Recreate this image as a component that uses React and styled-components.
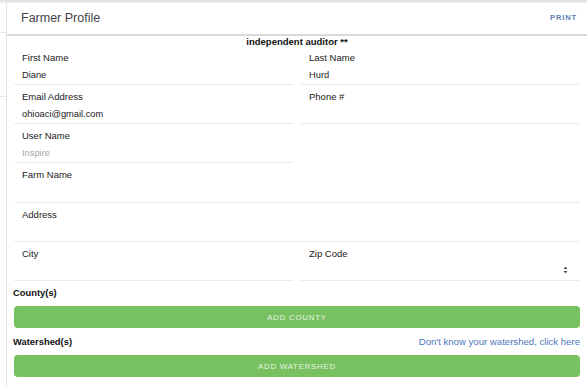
import React from "react";
import styled, { createGlobalStyle } from "styled-components";

const Global = createGlobalStyle`
  html, body { margin: 0; padding: 0; background: #fff; }
  body { font-family: "Liberation Sans", Arial, Helvetica, sans-serif; color: #1a1a1a; }
  * { box-sizing: border-box; }
`;

const Screen = styled.div`
  width: 587px;
  height: 387px;
  overflow: hidden;
  display: flex;
  flex-direction: column;
`;

const TopShade = styled.div`
  height: 3px;
  flex: none;
  background: linear-gradient(#dedede, #efefef);
`;

const Stage = styled.div`
  flex: 1;
  display: flex;
`;

const Backdrop = styled.div`
  width: 7px;
  flex: none;
  border-right: 1px solid #e4e4e4;
  display: flex;
  flex-direction: column;
`;

const BackdropRow = styled.div`
  height: ${(p) => p.$h}px;
  border-bottom: 1px solid #e6e6e6;
`;

const Modal = styled.div`
  flex: 1;
  display: flex;
  flex-direction: column;
  background: #fff;
`;

const Header = styled.div`
  height: 33px;
  display: flex;
  align-items: center;
  justify-content: space-between;
  padding: 0 10px 1px 14px;
  border-bottom: 2px solid #dadada;
`;

const Title = styled.div`
  font-size: 12.5px;
  color: #444;
`;

const PrintLink = styled.a`
  font-size: 7.5px;
  font-weight: 700;
  letter-spacing: 0.9px;
  color: #5a7db5;
  text-decoration: none;
  margin-top: -2px;
`;

const Body = styled.div`
  padding: 0 7px;
`;

const Notice = styled.div`
  font-size: 9.5px;
  font-weight: 700;
  line-height: 11px;
  height: 10px;
  text-align: center;
  color: #111;
`;

const Grid = styled.div`
  display: grid;
  grid-template-columns: 1fr 1fr;
  column-gap: 8px;
`;

const Field = styled.div`
  height: ${(p) => p.$h || 39}px;
  padding: 6px 8px 0;
  border-bottom: ${(p) => (p.$empty ? "none" : "1px solid #ebebeb")};
  grid-column: ${(p) => (p.$full ? "1 / -1" : "auto")};
  position: relative;
`;

const Label = styled.div`
  font-size: 9.5px;
  line-height: 12px;
  color: #1a1a1a;
`;

const Value = styled.div`
  font-size: 9.3px;
  line-height: 12px;
  margin-top: 5px;
  color: ${(p) => (p.$placeholder ? "#a8a8a8" : "#1a1a1a")};
`;

const Spinner = styled.svg`
  position: absolute;
  right: 12px;
  top: 24px;
`;

const SectionHead = styled.div`
  display: flex;
  justify-content: space-between;
  align-items: center;
  margin-top: ${(p) => p.$mt}px;
  line-height: 12px;
`;

const SectionTitle = styled.div`
  font-size: 9.4px;
  font-weight: 700;
  color: #111;
  margin-left: -1px;
`;

const HelpLink = styled.a`
  font-size: 9.6px;
  color: #4d78bd;
  text-decoration: none;
`;

const GreenButton = styled.button`
  display: block;
  width: 100%;
  height: 22px;
  margin-top: 7px;
  border: none;
  border-radius: 4px;
  background: #78c160;
  color: #e8f4e2;
  font-family: "Liberation Sans", Arial, sans-serif;
  font-size: 7.8px;
  letter-spacing: 0.8px;
  padding: 0;
`;

export default function App() {
  return (
    <Screen>
      <Global />
      <TopShade />
      <Stage>
        <Backdrop>
          <BackdropRow $h={30} />
          <BackdropRow $h={64} />
        </Backdrop>
        <Modal>
          <Header>
            <Title>Farmer Profile</Title>
            <PrintLink href="#">PRINT</PrintLink>
          </Header>
          <Body>
            <Notice>independent auditor **</Notice>
            <Grid>
              <Field>
                <Label>First Name</Label>
                <Value>Diane</Value>
              </Field>
              <Field>
                <Label>Last Name</Label>
                <Value>Hurd</Value>
              </Field>
              <Field>
                <Label>Email Address</Label>
                <Value>ohioaci@gmail.com</Value>
              </Field>
              <Field>
                <Label>Phone #</Label>
              </Field>
              <Field>
                <Label>User Name</Label>
                <Value $placeholder>Inspire</Value>
              </Field>
              <Field $empty />
              <Field $full $h={40}>
                <Label>Farm Name</Label>
              </Field>
              <Field $full>
                <Label>Address</Label>
              </Field>
              <Field>
                <Label>City</Label>
              </Field>
              <Field>
                <Label>Zip Code</Label>
                <Spinner width="5" height="8" viewBox="0 0 5 8">
                  <path d="M2.5 0.5 L4.5 3 L0.5 3 Z" fill="#555" />
                  <path d="M2.5 7.5 L4.5 5 L0.5 5 Z" fill="#555" />
                </Spinner>
              </Field>
            </Grid>
            <SectionHead $mt={6}>
              <SectionTitle>County(s)</SectionTitle>
            </SectionHead>
            <GreenButton>ADD COUNTY</GreenButton>
            <SectionHead $mt={8}>
              <SectionTitle>Watershed(s)</SectionTitle>
              <HelpLink href="#">Don't know your watershed, click here</HelpLink>
            </SectionHead>
            <GreenButton>ADD WATERSHED</GreenButton>
          </Body>
        </Modal>
      </Stage>
    </Screen>
  );
}
